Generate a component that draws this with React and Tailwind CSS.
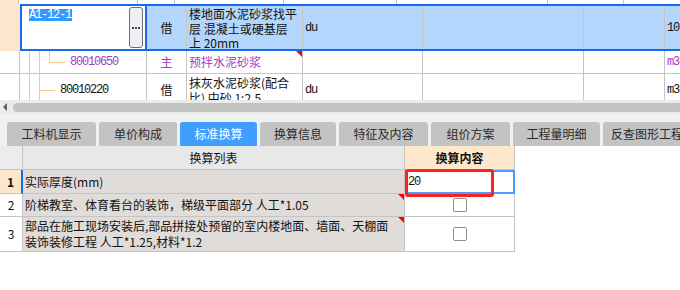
import React from 'react';

const FONT = "font-['Noto_Sans_CJK_SC','Noto_Sans',sans-serif]";
// half-width latin like the original grid font
const MONO = "font-['Liberation_Mono',monospace] text-[12px] tracking-[-1.2px]";

// small red corner flag used on cells with notes
function Flag() {
  return <span className="absolute top-0 right-0 w-0 h-0 border-l-[6px] border-l-transparent border-t-[6px] border-t-[#ff0000]" />;
}

function TreeLines({ kind }) {
  return (
    <svg className="absolute inset-0" width="127" height="32">
      <line x1="9.5" y1="0" x2="9.5" y2="32" stroke="#f6c986" />
      <line x1="19.5" y1="0" x2="19.5" y2="32" stroke="#f6c986" />
      {kind === 'child' ? (
        <>
          <line x1="29.5" y1="0" x2="29.5" y2="11.5" stroke="#f6c986" />
          <line x1="29.5" y1="11.5" x2="45" y2="11.5" stroke="#f6c986" />
        </>
      ) : (
        <line x1="19.5" y1="16.5" x2="35" y2="16.5" stroke="#f6c986" />
      )}
    </svg>
  );
}

function TopGrid() {
  const line = 'border-r border-[#c4c4c4]';
  return (
    <div className="h-[100px] overflow-hidden bg-white text-[12px] text-[#111]">
      {/* tail of previous row */}
      <div className="flex h-[4px]">
        <div className="w-[20px] bg-[#fde7cc] border-r border-[#c4c4c4]" />
        <div className={`w-[127px] ${line}`} />
        <div className={`w-[40px] ${line}`} />
        <div className={`w-[116px] ${line}`} />
        <div className={`w-[120px] ${line}`} />
        <div className={`w-[161px] ${line}`} />
        <div className={`w-[81px] ${line}`} />
        <div className="w-[60px]" />
      </div>

      {/* selected row */}
      <div className="flex h-[47px]">
        <div className="w-[20px] shrink-0 bg-[#fde7cc]" />
        <div className="flex flex-1 border-y-2 border-[#1769f0] bg-[#b5d6fc]">
          <div className="w-[127px] shrink-0 flex justify-between bg-white border-x-2 border-[#1769f0] pl-[7px] pr-[2px] py-[1px]">
            <span className={`self-start mt-[2px] pr-[1px] leading-[12px] bg-[#3399ff] text-white ${MONO}`}>A1-12-1</span>
            <div className="w-[14px] rounded-[3px] border border-[#6e6e6e] bg-[#eef0f6] flex items-center justify-center gap-[1px]">
              <span className="w-[2px] h-[2px] bg-[#4a4a4a]" />
              <span className="w-[2px] h-[2px] bg-[#4a4a4a]" />
              <span className="w-[2px] h-[2px] bg-[#4a4a4a]" />
            </div>
          </div>
          <div className={`w-[40px] shrink-0 flex items-center justify-center ${line}`}>借</div>
          <div className={`w-[116px] shrink-0 pl-[2px] pr-[4px] pt-[1px] leading-[14.5px] ${line}`}>楼地面水泥砂浆找平层 混凝土或硬基层上 20mm</div>
          <div className={`w-[120px] shrink-0 flex items-center pl-[2px] ${line}`}><span className={MONO}>du</span></div>
          <div className={`w-[161px] shrink-0 ${line}`} />
          <div className={`w-[81px] shrink-0 ${line}`} />
          <div className="w-[60px] shrink-0 flex items-center pl-[2px]"><span className={MONO}>10</span></div>
        </div>
      </div>

      {/* child row */}
      <div className="flex h-[23px] border-b border-[#c4c4c4]">
        <div className={`w-[20px] shrink-0 ${line}`} />
        <div className={`relative w-[127px] shrink-0 flex items-center pl-[50px] text-[#a23bc4] ${line}`}>
          <TreeLines kind="child" />
          <span className={`relative ${MONO}`}>80010650</span>
        </div>
        <div className={`w-[40px] shrink-0 flex items-center justify-center text-[#a23bc4] ${line}`}>主</div>
        <div className={`relative w-[116px] shrink-0 flex items-center pl-[2px] text-[#a23bc4] ${line}`}>
          预拌水泥砂浆
          <Flag />
        </div>
        <div className={`w-[120px] shrink-0 ${line}`} />
        <div className={`w-[161px] shrink-0 ${line}`} />
        <div className={`w-[81px] shrink-0 ${line}`} />
        <div className="w-[60px] shrink-0 flex items-center pl-[2px] text-[#a23bc4]"><span className={MONO}>m3</span></div>
      </div>

      <div className="flex h-[32px]">
        <div className={`w-[20px] shrink-0 ${line}`} />
        <div className={`relative w-[127px] shrink-0 flex items-center pl-[40px] ${line}`}>
          <TreeLines kind="sib" />
          <span className={`relative ${MONO}`}>80010220</span>
        </div>
        <div className={`w-[40px] shrink-0 flex items-center justify-center ${line}`}>借</div>
        <div className={`w-[116px] shrink-0 pl-[2px] pr-[4px] pt-[2px] leading-[14.5px] ${line}`}>抹灰水泥砂浆(配合比) 中砂 1:2.5</div>
        <div className={`w-[120px] shrink-0 flex items-center pl-[2px] ${line}`}><span className={MONO}>du</span></div>
        <div className={`w-[161px] shrink-0 ${line}`} />
        <div className={`w-[81px] shrink-0 ${line}`} />
        <div className="w-[60px] shrink-0 flex items-center pl-[2px]"><span className={MONO}>m3</span></div>
      </div>
    </div>
  );
}

function Scrollbar() {
  return (
    <div className="flex items-center h-[14px] bg-[#ebebeb]">
      <span className="ml-[3px] w-0 h-0 border-y-[4px] border-y-transparent border-r-[4px] border-r-[#5c5c5c]" />
      <div className="ml-[6px] h-[9px] flex-1 rounded-l-full bg-[#c2c2c2]" />
    </div>
  );
}

const tabs = [
  { label: '工料机显示', w: 'w-[89px]' },
  { label: '单价构成', w: 'w-[78px]' },
  { label: '标准换算', w: 'w-[77px]', active: true },
  { label: '换算信息', w: 'w-[76px]' },
  { label: '特征及内容', w: 'w-[89px]' },
  { label: '组价方案', w: 'w-[79px]' },
  { label: '工程量明细', w: 'w-[87px]' },
  { label: '反查图形工程量', w: 'w-[100px]' },
];

function Tabs() {
  return (
    <div className="flex gap-[3px] pl-[7px] h-[24px] overflow-hidden bg-[#f0f0f0] text-[12px]">
      {tabs.map((t) => (
        <div
          key={t.label}
          className={`${t.w} shrink-0 rounded-t-[3px] flex items-center justify-center ${t.active ? 'bg-[#409eff] text-white' : 'bg-[#c3c3c3] text-[#2a2a2a]'}`}
        >
          {t.label}
        </div>
      ))}
    </div>
  );
}

function Checkbox() {
  return <span className="w-[14px] h-[14px] rounded-[2px] border border-[#8e8e8e] bg-white" />;
}

function BottomGrid() {
  const b = 'border-r border-b border-[#c4c4c4]';
  return (
    <div className="w-[515px] text-[12px] text-[#111]">
      <div className="flex h-[24px]">
        <div className={`w-[23px] shrink-0 bg-[#ececec] ${b}`} />
        <div className={`w-[382px] shrink-0 bg-[#e8e8e8] flex items-center justify-center ${b}`}>换算列表</div>
        <div className={`w-[110px] shrink-0 bg-[#fde8cc] flex items-center justify-center font-bold ${b}`}>换算内容</div>
      </div>

      <div className="flex h-[24px]">
        <div className="w-[23px] shrink-0 bg-[#fde7cc] border-r-2 border-r-[#1769f0] border-b border-b-[#c4c4c4] flex items-center justify-center font-bold">1</div>
        <div className={`w-[382px] shrink-0 bg-[#e0dcd9] flex items-center pl-[2px] ${b}`}>实际厚度(mm)</div>
        <div className="relative w-[110px] shrink-0 border-2 border-[#4d9bff] bg-white flex items-center pl-[1px]">
          <span className={MONO}>20</span>
          <div className="absolute left-[-2px] top-[-3px] w-[89px] h-[28px] rounded-[3px] border-[3px] border-[#ff1f1f]" />
        </div>
      </div>

      <div className="flex h-[23px]">
        <div className={`w-[23px] shrink-0 bg-white flex items-center justify-center ${b}`}>2</div>
        <div className={`relative w-[382px] shrink-0 bg-[#e0dcd9] flex items-center pl-[2px] ${b}`}>
          阶梯教室、体育看台的装饰，梯级平面部分 人工*1.05
          <Flag />
        </div>
        <div className={`w-[110px] shrink-0 bg-white flex items-center justify-center ${b}`}>
          <Checkbox />
        </div>
      </div>

      <div className="flex h-[35px]">
        <div className={`w-[23px] shrink-0 bg-white flex items-center justify-center ${b}`}>3</div>
        <div className={`relative w-[382px] shrink-0 bg-[#e0dcd9] flex flex-col justify-center pl-[2px] leading-[16px] ${b}`}>
          <div>部品在施工现场安装后,部品拼接处预留的室内楼地面、墙面、天棚面</div>
          <div>装饰装修工程 人工*1.25,材料*1.2</div>
          <Flag />
        </div>
        <div className={`w-[110px] shrink-0 bg-white flex items-center justify-center ${b}`}>
          <Checkbox />
        </div>
      </div>
    </div>
  );
}

export default function App() {
  return (
    <div className={`w-[680px] h-[290px] overflow-hidden bg-white ${FONT}`}>
      <TopGrid />
      <Scrollbar />
      <div className="h-[8px] bg-[#f0f0f0]" />
      <Tabs />
      <BottomGrid />
    </div>
  );
}
